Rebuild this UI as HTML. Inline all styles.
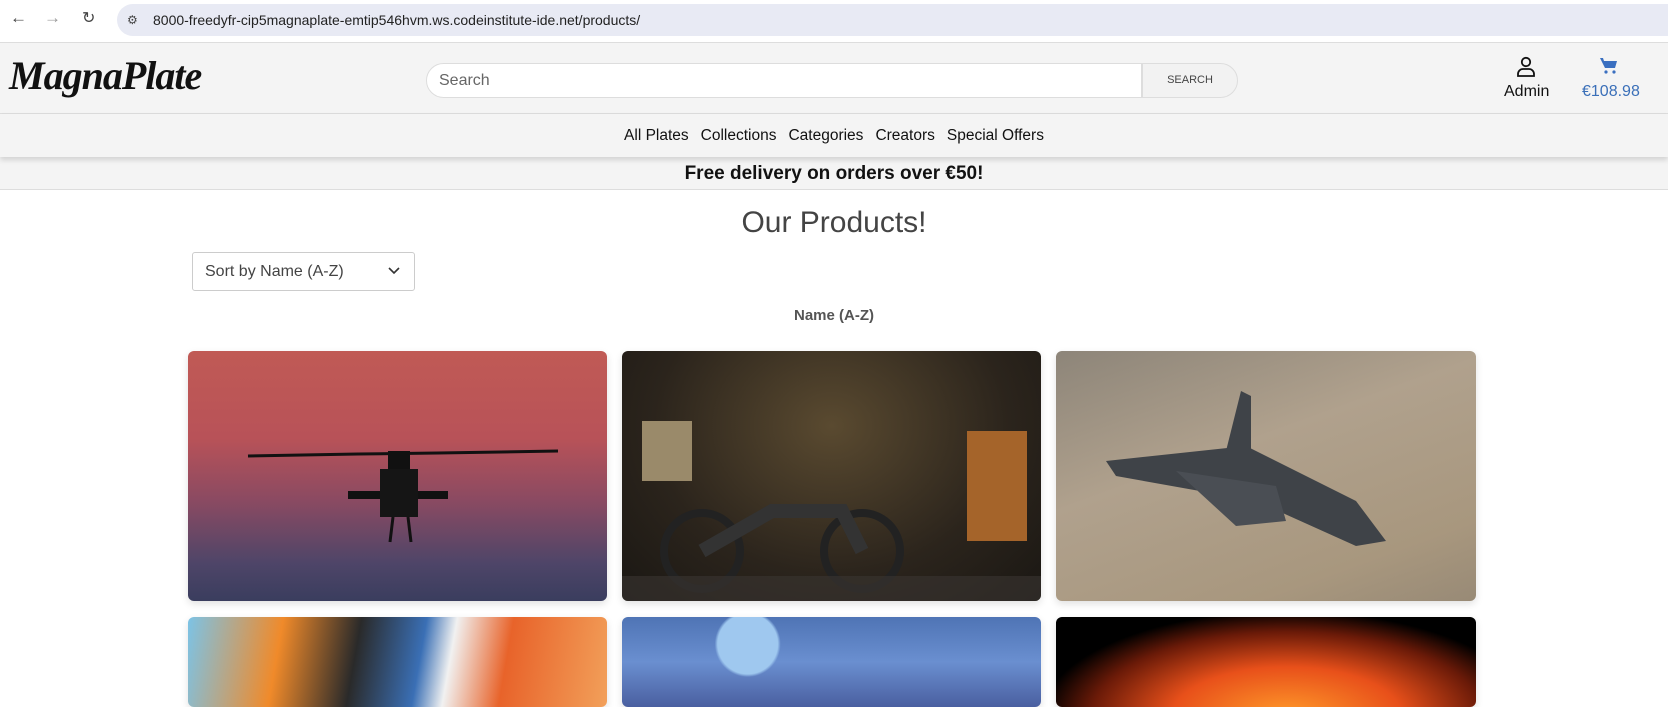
<!DOCTYPE html>
<html><head><meta charset="utf-8"><style>
*{box-sizing:border-box;margin:0;padding:0}
body{width:1668px;height:694px;overflow:hidden;background:#fff;font-family:"Liberation Sans",sans-serif;position:relative}
.abs{position:absolute}
.chrome{top:0;left:0;width:1668px;height:40px;background:#fff}
.url{left:117px;top:4px;width:1551px;height:32px;background:#e8eaf4;border-radius:16px 0 0 16px;font-size:14px;color:#222;line-height:32px;padding-left:36px}
.hdr{top:42px;left:0;width:1668px;height:72px;background:#f4f4f4;border-top:1px solid #ddd;border-bottom:1px solid #ddd}
.nav{top:114px;left:0;width:1668px;height:43px;background:#f4f4f4;box-shadow:0 3px 5px rgba(0,0,0,.14);text-align:center;font-size:15.5px;line-height:43px;color:#111;z-index:2}
.nav span{margin:0 6px}
.banner{top:157px;left:0;width:1668px;height:33px;background:#f4f4f4;border-bottom:1px solid #ddd;text-align:center;font-size:19px;font-weight:bold;line-height:33px;color:#111}
.card{border-radius:6px;box-shadow:0 3px 8px rgba(0,0,0,.12);overflow:hidden}
</style></head><body>
<div class="abs chrome">
<div class="abs" style="left:10px;top:8px;font-size:17px;color:#444">&#8592;</div>
<div class="abs" style="left:44px;top:8px;font-size:17px;color:#999">&#8594;</div>
<div class="abs" style="left:82px;top:8px;font-size:16px;color:#444">&#8635;</div>
<div class="abs url"><span class="abs" style="left:10px;top:0;font-size:12px;color:#444">&#9881;</span>8000-freedyfr-cip5magnaplate-emtip546hvm.ws.codeinstitute-ide.net/products/</div>
</div>
<div class="abs hdr">
<div class="abs" style="left:9px;top:9px;font-family:'Liberation Serif',serif;font-style:italic;font-weight:bold;font-size:40px;letter-spacing:-1px;color:#111">MagnaPlate</div>
<div class="abs" style="left:426px;top:20px;width:716px;height:35px;background:#fff;border:1px solid #ddd;border-radius:18px 0 0 18px;font-size:16px;color:#666;line-height:33px;padding-left:12px">Search</div>
<div class="abs" style="left:1142px;top:20px;width:96px;height:35px;background:#f2f2f2;border:1px solid #ddd;border-radius:0 18px 18px 0;font-size:11px;color:#444;line-height:33px;text-align:center">SEARCH</div>
<svg class="abs" style="left:1515px;top:13px" width="22" height="22" viewBox="0 0 22 22" fill="none" stroke="#111" stroke-width="1.8"><circle cx="11" cy="6" r="4.2"/><path d="M3 20v-2a5 5 0 0 1 5-5h6a5 5 0 0 1 5 5v2z"/></svg>
<div class="abs" style="left:1504px;top:40px;font-size:16px;color:#111">Admin</div>
<svg class="abs" style="left:1600px;top:14px" width="18" height="18" viewBox="0 0 18 18" fill="#3a6fc0"><path d="M0 1h3l1 3h13l-2 7H5z"/><circle cx="6" cy="15" r="1.6"/><circle cx="14" cy="15" r="1.6"/></svg>
<div class="abs" style="left:1582px;top:40px;font-size:16px;color:#3a6fb8">€108.98</div>
</div>
<div class="abs nav"><span>All Plates</span><span>Collections</span><span>Categories</span><span>Creators</span><span>Special Offers</span></div>
<div class="abs banner">Free delivery on orders over €50!</div>
<div class="abs" style="left:0;top:206px;width:1668px;text-align:center;font-size:30px;color:#444">Our Products!</div>
<div class="abs" style="left:192px;top:252px;width:223px;height:39px;border:1px solid #ccc;border-radius:3px;font-size:16px;color:#444;line-height:37px;padding-left:12px">Sort by Name (A-Z)<svg class="abs" style="right:14px;top:14px" width="12" height="8" viewBox="0 0 12 8" fill="none" stroke="#333" stroke-width="1.6"><path d="M1 1l5 5 5-5"/></svg></div>
<div class="abs" style="left:0;top:307px;width:1668px;text-align:center;font-size:15px;font-weight:bold;color:#555">Name (A-Z)</div>

<div class="abs card" style="left:188px;top:351px;width:419px;height:250px;background:linear-gradient(180deg,#c05a55 0%,#b85258 35%,#8a4a62 60%,#4e4568 85%,#3a3d5e 100%)">
<svg width="419" height="250"><path d="M60 105 L170 103 L250 102 L370 100" stroke="#111" stroke-width="3"/><rect x="200" y="100" width="22" height="30" fill="#111"/><rect x="160" y="140" width="100" height="8" fill="#111"/><rect x="192" y="118" width="38" height="48" fill="#151515"/><path d="M205 166l-3 25M220 166l3 25" stroke="#111" stroke-width="3"/></svg></div>
<div class="abs card" style="left:622px;top:351px;width:419px;height:250px;background:radial-gradient(ellipse at 50% 30%,#5a4a30,#2b241c 60%,#1a1713)">
<svg width="419" height="250"><rect x="20" y="70" width="50" height="60" fill="#9a8a6a"/><rect x="345" y="80" width="60" height="110" fill="#a5642a"/><circle cx="80" cy="200" r="38" fill="none" stroke="#222" stroke-width="8"/><circle cx="240" cy="200" r="38" fill="none" stroke="#222" stroke-width="8"/><path d="M80 200 L150 160 L220 160 L240 200" stroke="#333" stroke-width="14" fill="none"/><rect x="0" y="225" width="419" height="25" fill="#3a3632" opacity=".6"/></svg></div>
<div class="abs card" style="left:1056px;top:351px;width:420px;height:250px;background:linear-gradient(160deg,#8d8579,#b0a18d 40%,#a8977e 80%,#988a76)">
<svg width="420" height="250"><path d="M50 110 L190 95 L300 150 L330 190 L300 195 L200 150 L60 125z" fill="#3f4348"/><path d="M170 100 L185 40 L195 45 L195 100z" fill="#3f4348"/><path d="M120 120 L220 135 L230 170 L180 175z" fill="#4a4e54"/></svg></div>

<div class="abs card" style="left:188px;top:617px;width:419px;height:90px;background:linear-gradient(100deg,#7cc3e6 0%,#f08a2a 22%,#2a2a2a 40%,#3a6fb5 55%,#f1f1f1 62%,#e8632a 75%,#f2a05a 100%)"></div>
<div class="abs card" style="left:622px;top:617px;width:419px;height:90px;background:radial-gradient(circle at 30% 30%,#9fc8ef 0 10%,transparent 11%),linear-gradient(180deg,#4f74b5,#6a8fd0 50%,#4a5fa0)"></div>
<div class="abs card" style="left:1056px;top:617px;width:420px;height:90px;background:radial-gradient(ellipse at 55% 110%,#ff9a2a 0,#e8501a 35%,#6a1a08 60%,#000 75%)"></div>
</body></html>
